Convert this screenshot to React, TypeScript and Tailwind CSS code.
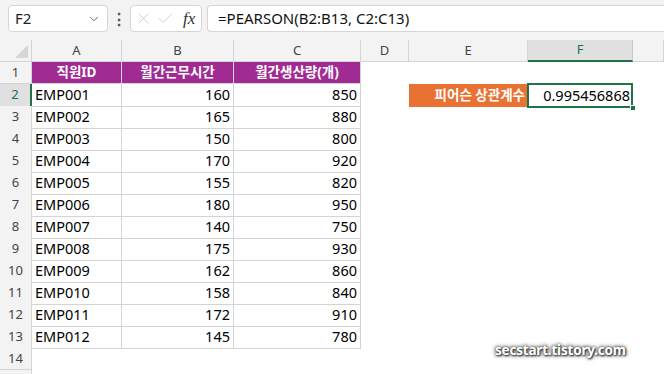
import { ChevronDown, X, Check } from "lucide-react";

const COLS = "grid grid-cols-[32px_90px_112px_127px_48px_119px_105px_1fr]";

const rows: [string, number, number][] = [
  ["EMP001", 160, 850],
  ["EMP002", 165, 880],
  ["EMP003", 150, 800],
  ["EMP004", 170, 920],
  ["EMP005", 155, 820],
  ["EMP006", 180, 950],
  ["EMP007", 140, 750],
  ["EMP008", 175, 930],
  ["EMP009", 162, 860],
  ["EMP010", 158, 840],
  ["EMP011", 172, 910],
  ["EMP012", 145, 780],
];

function FormulaBar() {
  return (
    <div className="flex h-[40px] items-start gap-0 bg-[#f3f3f3] pt-[5px] pl-[8px]">
      <div className="flex h-[27px] w-[100px] items-center justify-between rounded-[4px] border border-[#d6d6d6] bg-white pl-[6px] pr-[6px]">
        <span className="text-[15px] text-[#222]">F2</span>
        <ChevronDown size={14} strokeWidth={1.5} className="text-[#555]" />
      </div>
      <div className="flex h-[27px] w-[22px] items-center justify-center text-[#555]">
        <span className="text-[16px] font-bold leading-none">⋮</span>
      </div>
      <div className="flex h-[27px] w-[72px] items-center gap-[3px] rounded-[4px] border border-[#d6d6d6] bg-white pl-[3px]">
        <X size={19} strokeWidth={1} className="text-[#c4c4c4]" />
        <Check size={19} strokeWidth={1} className="text-[#c4c4c4]" />
        <span className="ml-[5px] font-['Liberation_Serif',serif] text-[17px] italic text-[#333]">fx</span>
      </div>
      <div className="ml-[5px] flex h-[27px] flex-1 items-center rounded-l-[4px] border border-r-0 border-[#d6d6d6] bg-white pl-[10px]">
        <span className="text-[15px] text-[#111]">=PEARSON(B2:B13, C2:C13)</span>
      </div>
    </div>
  );
}

function HeaderRow() {
  const letters = ["A", "B", "C", "D", "E", "F", ""];
  return (
    <div className={`${COLS} h-[22px] bg-[#f3f3f3] text-[13px] text-[#444]`}>
      <div className="relative border-r border-b border-[#d4d4d4]">
        <div className="absolute right-[3px] bottom-[3px] h-0 w-0 border-b-[13px] border-l-[13px] border-b-[#d6d6d6] border-l-transparent" />
      </div>
      {letters.map((l, i) =>
        l === "F" ? (
          <div
            key={i}
            className="flex items-center justify-center border-r border-b-2 border-r-[#c8c8c8] border-b-[#217346] bg-[#e0e0e0] text-[#217346]"
          >
            {l}
          </div>
        ) : (
          <div key={i} className="flex items-center justify-center border-r border-b border-[#d4d4d4]">
            {l}
          </div>
        )
      )}
    </div>
  );
}

function RowHead({ n, active }: { n?: number; active?: boolean }) {
  return active ? (
    <div className="flex items-center justify-center border-r-2 border-b border-r-[#217346] border-b-[#d4d4d4] bg-[#e0e0e0] text-[13px] text-[#217346]">
      {n}
    </div>
  ) : (
    <div className="flex items-center justify-center border-r border-b border-[#d4d4d4] bg-[#f3f3f3] text-[13px] text-[#444]">
      {n}
    </div>
  );
}

const cell = "border-r border-b border-[#d4d4d4] flex items-center";

export default function App() {
  return (
    <div className="relative h-[374px] w-[664px] overflow-hidden bg-white font-['Noto_Sans','Noto_Sans_CJK_KR',sans-serif]">
      <FormulaBar />
      <HeaderRow />

      <div className={`${COLS} h-[22px]`}>
        <RowHead n={1} />
        {["직원ID", "월간근무시간", "월간생산량(개)"].map((h) => (
          <div
            key={h}
            className={`${cell} justify-center bg-[#a02b93] text-[13.5px] font-bold text-white`}
          >
            {h}
          </div>
        ))}
        <div />
        <div />
        <div />
        <div />
      </div>

      {rows.map(([id, hours, qty], i) => (
        <div key={id} className={`${COLS} h-[22px] text-[14.5px] text-black`}>
          <RowHead n={i + 2} active={i === 0} />
          <div className={`${cell} pl-[3px]`}>{id}</div>
          <div className={`${cell} justify-end pr-[3px]`}>{hours}</div>
          <div className={`${cell} justify-end pr-[3px]`}>{qty}</div>
          <div />
          {i === 0 ? (
            <>
              <div className="flex items-center justify-end bg-[#e97132] pr-[3px] text-[13.5px] font-bold text-white">
                피어슨 상관계수
              </div>
              <div className="relative flex items-center justify-end pr-[3px]">
                0.995456868
                <div className="absolute -top-[1px] -left-[1px] right-0 -bottom-[1px] border-2 border-[#217346]" />
                <div className="absolute -right-[3px] -bottom-[4px] h-[6px] w-[6px] border border-white bg-[#217346]" />
              </div>
            </>
          ) : (
            <>
              <div />
              <div />
            </>
          )}
          <div />
        </div>
      ))}

      <div className={`${COLS} h-[22px]`}>
        <RowHead n={14} />
      </div>
      <div className={`${COLS} h-[22px]`}>
        <RowHead />
      </div>

      <div className="absolute left-[495px] top-[340px] text-[13.5px] font-bold tracking-[-0.2px] text-white [text-shadow:0_0_3px_#333,0_0_5px_#555,1px_1px_2px_#222]">
        secstart.tistory.com
      </div>
    </div>
  );
}
